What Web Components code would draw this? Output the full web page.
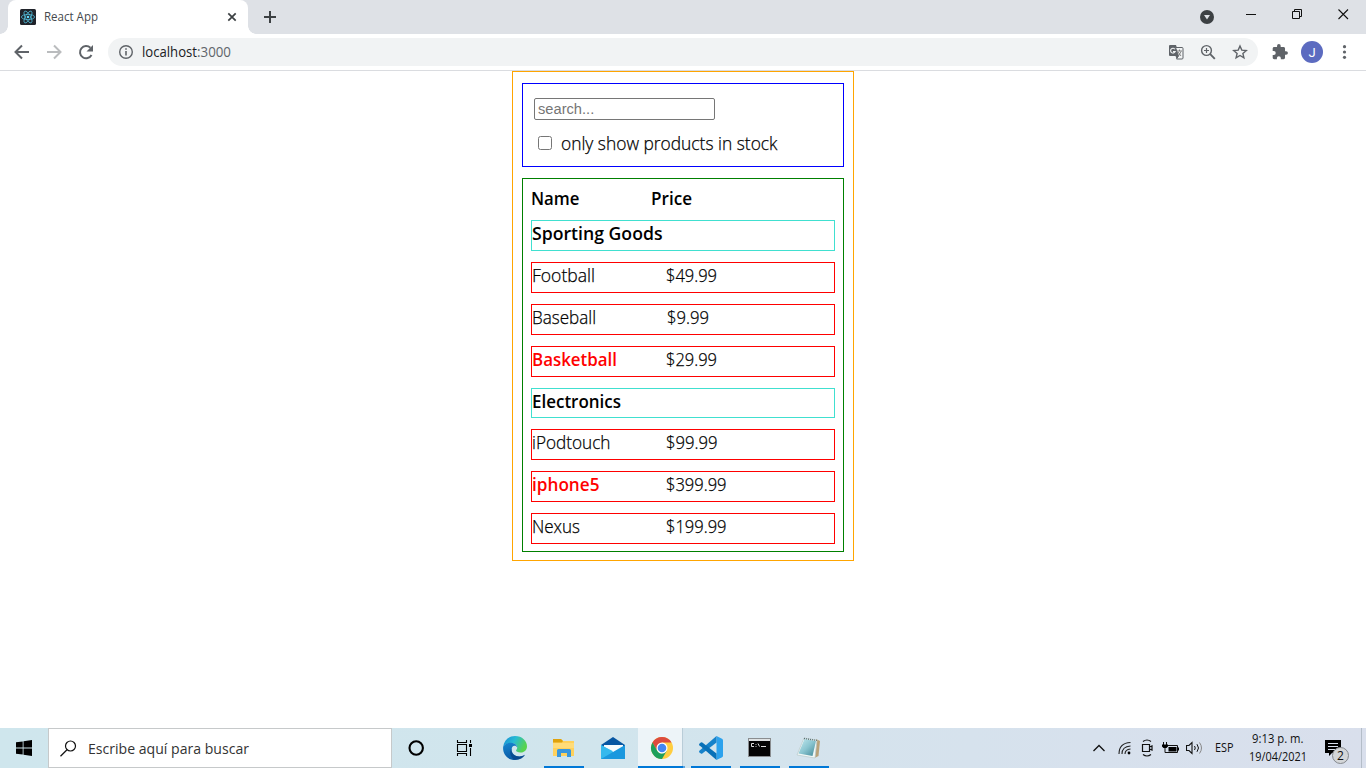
<!DOCTYPE html>
<html lang="es"><head><meta charset="utf-8"><title>React App</title>
<style>html,body{margin:0;height:100%;overflow:hidden;background:#fff;font-family:"Open Sans","Noto Sans",sans-serif}</style></head>
<body><desktop-screen></desktop-screen>
<script>
const define = (name, html, setup) => customElements.define(name, class extends HTMLElement {
  constructor(){ super(); const t=document.createElement('template'); t.innerHTML=html;
    this.attachShadow({mode:'open'}).append(t.content.cloneNode(true)); }
  connectedCallback(){ if(setup) setup.call(this,this.shadowRoot); }
});

/* Text run condensed or expanded to a given advance width */
define('fit-text', `<style>:host{display:block;flex:none;white-space:pre}span{display:inline-block;transform-origin:0 50%}</style><span><slot></slot></span>`,
 function(r){ const w=+this.getAttribute('w'), s=r.querySelector('span'); this.style.width=w+'px';
  s.style.transform='scaleX('+(w/s.getBoundingClientRect().width)+')'; });

define('browser-tabs', `<style>
:host{display:flex;height:34px;background:#dee1e6;padding-left:8px;box-sizing:border-box}
.tab{position:relative;width:240px;height:34px;background:#fff;border-radius:8px 8px 0 0;display:flex;align-items:center;padding-left:12px;box-sizing:border-box}
.tab:before,.tab:after{content:"";position:absolute;bottom:0;width:8px;height:8px}
.tab:before{left:-8px;background:radial-gradient(circle at 0 0,transparent 7.5px,#fff 8px)}
.tab:after{right:-8px;background:radial-gradient(circle at 100% 0,transparent 7.5px,#fff 8px)}
fit-text{margin-left:8px;font-size:12px;line-height:16px;color:#45494d}
.x{margin-left:128.5px}.plus{margin:10px 0 0 15px}.sp{flex:1}svg{display:block;flex:none}
.acc{margin:10px 32px 0 0}.min{margin:9px 35px 0 0}.max{margin:9px 35px 0 0}.close{margin:9px 17px 0 0}
</style>
<div class="tab"><svg width="16" height="16"><rect width="16" height="16" rx="1.5" fill="#20232a"/><g fill="none" stroke="#50b8d4" stroke-width=".8"><ellipse cx="8" cy="8" rx="6.6" ry="2.6"/><ellipse cx="8" cy="8" rx="6.6" ry="2.6" transform="rotate(60 8 8)"/><ellipse cx="8" cy="8" rx="6.6" ry="2.6" transform="rotate(120 8 8)"/></g><circle cx="8" cy="8" r="1.3" fill="#61dafb"/></svg>
<fit-text w="54">React App</fit-text><svg class="x" width="10" height="10"><path d="M1.3 1.3l7.4 7.4M8.7 1.3L1.3 8.7" stroke="#3c4043" stroke-width="1.7"/></svg></div>
<svg class="plus" width="14" height="14"><path d="M7 1v12M1 7h12" stroke="#3c4043" stroke-width="2"/></svg><div class="sp"></div>
<svg class="acc" width="14" height="14"><circle cx="7" cy="7" r="7" fill="#3c4043"/><path d="M4 5h6L7 9.5z" fill="#dee1e6"/></svg>
<svg class="min" width="11" height="11"><path d="M0 5.5h10" stroke="#111"/></svg>
<svg class="max" width="11" height="11"><path d="M.5 2.5h7v7h-7zM2.5 2.5v-2h7v7h-2" fill="none" stroke="#111"/></svg>
<svg class="close" width="11" height="11"><path d="M.5.5l9.5 9.5M10 .5L.5 10" stroke="#111" stroke-width="1.1"/></svg>`);

define('browser-toolbar', `<style>
:host{display:flex;align-items:center;height:37px;border-bottom:1px solid #dadce0;box-sizing:border-box;padding:0 9px 0 12px;background:#fff}
svg{display:block;flex:none}.nav{gap:12px;display:flex;width:96px}
.omni{display:flex;align-items:center;width:1150px;height:28px;border-radius:14px;background:#f1f3f4;box-sizing:border-box;padding:0 8px 0 8px}
fit-text{font-size:14px;line-height:20px;color:#202124}.host{margin-left:6px}.port{color:#60656a}
.sp{flex:1}.omni .a{margin-right:12px}.puz{margin-left:12px}
.av{width:22px;height:22px;border-radius:50%;background:#5c6bc0;color:#fff;display:flex;align-items:center;justify-content:center;font:13px Roboto,sans-serif;margin:0 10px 0 11px}
</style><div class="nav">
<svg width="20" height="20" viewBox="0 0 20 20"><path d="M17 10H4M10 3.500L3.500 10l6.500 6.500" fill="none" stroke="#5f6368" stroke-width="2"/></svg>
<svg width="20" height="20" viewBox="0 0 20 20"><path d="M3 10h13M10 3.500l6.500 6.500-6.500 6.500" fill="none" stroke="#babcbe" stroke-width="2"/></svg>
<svg width="20" height="20" viewBox="0 0 20 20"><path d="M15.500 13A6.100 6.100 0 1 1 14.400 5.800" fill="none" stroke="#5f6368" stroke-width="2"/><path d="M17 3v6.500h-6.500z" fill="#5f6368"/></svg></div>
<div class="omni"><svg width="20" height="20" viewBox="0 0 20 20"><circle cx="10" cy="10" r="6.300" fill="none" stroke="#5f6368" stroke-width="1.400"/><path d="M10 9v4.500M10 6.200v1.600" stroke="#5f6368" stroke-width="1.600"/></svg>
<fit-text class="host" w="55">localhost</fit-text><fit-text class="port" w="34">:3000</fit-text><div class="sp"></div>
<svg class="a" width="20" height="20" viewBox="0 0 20 20"><path d="M4 3h6l1.500 4.500L13 15l-2.500 1.500L9.500 14H4a1 1 0 0 1-1-1V4a1 1 0 0 1 1-1z" fill="#5f6368"/><path d="M9.500 5.500h6.500a1 1 0 0 1 1 1V16a1 1 0 0 1-1 1h-5.500l2-3z" fill="#f1f3f4" stroke="#5f6368"/><path d="M9 7.300A2.400 2.400 0 1 0 9.200 9.600H7" fill="none" stroke="#f1f3f4" stroke-width="1.100"/><path d="M11 9h5M13.500 7.500V9M12 10l3 4M15 9.500L12.500 14" fill="none" stroke="#777" stroke-width=".9"/></svg>
<svg class="a" width="20" height="20" viewBox="0 0 20 20"><circle cx="8.500" cy="8.500" r="4.900" fill="none" stroke="#5f6368" stroke-width="1.400"/><path d="M12.200 12.200l4.600 4.600" stroke="#5f6368" stroke-width="1.900"/><path d="M8.500 6v5M6 8.500h5" stroke="#5f6368" stroke-width="1.200"/></svg>
<svg width="20" height="20" viewBox="0 0 20 20"><path d="M10 4l1.800 4.100 4.500.4-3.400 3 1 4.400L10 13.500l-3.900 2.400 1-4.400-3.400-3 4.500-.4z" fill="none" stroke="#5f6368" stroke-width="1.400"/></svg></div>
<svg class="puz" width="20" height="20" viewBox="0 0 24 24"><path fill="#5f6368" d="M20.500 11H19V7c0-1.100-.9-2-2-2h-4V3.500a2.500 2.500 0 0 0-5 0V5H4c-1.100 0-2 .9-2 2v3.800h1.500a2.700 2.700 0 0 1 0 5.400H2V20c0 1.100.9 2 2 2h3.800v-1.500a2.700 2.700 0 0 1 5.400 0V22H17c1.100 0 2-.9 2-2v-4h1.500a2.500 2.500 0 0 0 0-5z" transform="translate(1.500 1.500) scale(.87)"/></svg>
<div class="av">J</div><svg width="22" height="20"><g fill="#5f6368"><circle cx="11.500" cy="4.700" r="1.600"/><circle cx="11.500" cy="10" r="1.600"/><circle cx="11.500" cy="15.300" r="1.600"/></g></svg>`);

define('search-bar', `<style>
:host{display:flex;flex-direction:column;height:84px;box-sizing:border-box;border:1px solid #00f;padding:14px 11px 0}
input[type=text]{display:block;box-sizing:border-box;width:181px;height:22px;margin:0;padding:1px 3px;border:1px solid #767676;border-radius:2px;font:14.67px "Liberation Sans",sans-serif;outline:0}
input::placeholder{color:#757575}
label{display:flex;align-items:center;height:24px;margin-top:11px;padding-left:4px;color:#000}
.box{appearance:none;width:14px;height:14px;margin:0 8.500px 0 0;box-sizing:border-box;border:1px solid #767676;border-radius:2.500px;background:#fff}
fit-text{font-size:17.6px;line-height:24px;font-weight:350;-webkit-text-stroke:.25px #000}
</style><input type="text" placeholder="search..."><label><input class="box" type="checkbox"><fit-text w="216.500">only show products in stock</fit-text></label>`);

define('category-row', `<style>:host{display:block;height:31px;box-sizing:border-box;border:1px solid turquoise;font-weight:650;font-size:17.6px;line-height:24px}</style><slot></slot>`);
define('product-row', `<style>:host{display:grid;grid-template-columns:134px 1fr;height:31px;box-sizing:border-box;border:1px solid red;font-size:17.6px;line-height:24px;color:#000}</style><slot></slot>`);
define('product-table', `<style>
:host{display:flex;flex-direction:column;gap:11px;height:374px;box-sizing:border-box;border:1px solid green;padding:7px 8px 0;color:#000}
header{display:grid;grid-template-columns:119.500px 1fr;height:23px;font-size:17.6px;line-height:24px;font-weight:650}
.short{height:30px}
product-row fit-text{font-weight:350;-webkit-text-stroke:.25px #000}
product-row[out] fit-text:first-child{color:red;font-weight:650;-webkit-text-stroke:0}
.wide{grid-template-columns:133.500px 1fr}.near{grid-template-columns:135px 1fr}
</style><header><fit-text w="48.500">Name</fit-text><fit-text w="41">Price</fit-text></header>
<category-row><fit-text w="130.500">Sporting Goods</fit-text></category-row>
<product-row><fit-text w="63">Football</fit-text><fit-text w="51">$49.99</fit-text></product-row>
<product-row class="near"><fit-text w="64">Baseball</fit-text><fit-text w="42">$9.99</fit-text></product-row>
<product-row out><fit-text w="85">Basketball</fit-text><fit-text w="51">$29.99</fit-text></product-row>
<category-row class="short"><fit-text w="89">Electronics</fit-text></category-row>
<product-row><fit-text w="78.500">iPodtouch</fit-text><fit-text w="51.500">$99.99</fit-text></product-row>
<product-row class="wide" out><fit-text w="67.500">iphone5</fit-text><fit-text w="60.500">$399.99</fit-text></product-row>
<product-row class="wide"><fit-text w="48">Nexus</fit-text><fit-text w="60.500">$199.99</fit-text></product-row>`);
define('product-app', `<style>:host{display:flex;flex-direction:column;gap:11px;width:342px;height:490px;box-sizing:border-box;border:1px solid orange;padding:11px 9px 0;margin:0 auto}</style><search-bar></search-bar><product-table></product-table>`);

define('task-item', `<style>:host{display:flex;position:relative;flex:none;width:49px;height:40px;align-items:center;justify-content:center}
::slotted(svg){display:block;position:relative}
:host([open]):after{content:"";position:absolute;left:5px;bottom:0;width:40px;height:2px;background:#0078d7}
:host([active]){background:linear-gradient(90deg,transparent 1px,#edf4f8 1px,#edf4f8 45px,#b9cdd8 45px,#b9cdd8 46px,#d3e3ec 46px,#d3e3ec 48px,transparent 48px)}
:host([active]):after{left:1px;width:47px;background:linear-gradient(90deg,#0078d7 45px,#5ba5df 45px)}</style><slot></slot>`);
define('task-bar', `<style>
:host{display:flex;height:40px;background:linear-gradient(90deg,#cfe6ed 0,#d1e5ed 45%,#d5e3ed 62%,#d7e1ed 80%,#d9dfec 100%);color:#111}
svg{display:block;flex:none}
.start{width:48px;display:flex;align-items:center;justify-content:center}
.search{display:flex;align-items:center;width:344px;box-sizing:border-box;border:1px solid #c6c9ca;background:#fff;padding-left:11px;gap:11px;font-size:14.5px;color:#333}
.apps{display:flex;flex:1}.tray{display:flex;align-items:center}
.esp{font-size:12px;line-height:16px;margin:0 16px 0 11px}.clock{font-size:12px;line-height:18px;display:flex;flex-direction:column;align-items:center;width:58px;margin-right:18px}
.note{position:relative;width:37px;height:40px;border-right:1px solid #b4bdc8;margin-right:4px;box-sizing:border-box}
.note svg{margin-top:11px}
.badge{position:absolute;left:7px;top:19px;width:17px;height:17px;border-radius:50%;box-sizing:border-box;border:1px solid #85898e;background:#d4d6d8;font-size:12px;line-height:15px;text-align:center}
</style>
<div class="start"><svg width="16" height="16"><path d="M0 2.300L6.700 1.400v6.200H0zM7.500 1.300L16 0v7.600H7.500zM0 8.400h6.700v6.200L0 13.700zM7.500 8.400H16V16l-8.500-1.200z"/></svg></div>
<div class="search"><svg width="17" height="17"><circle cx="10.500" cy="6" r="5" fill="none" stroke="#111" stroke-width="1.200"/><path d="M7 9.700L.5 16.200" stroke="#111" stroke-width="1.300"/></svg><fit-text w="161">Escribe aquí para buscar</fit-text></div>
<div class="apps">
<task-item><svg width="18" height="18"><circle cx="8.200" cy="9" r="6.700" fill="none" stroke="#000" stroke-width="2.100"/></svg></task-item>
<task-item><svg width="20" height="18"><path d="M1.500 5.500h9v7h-9zM1.500 1v2.500h9V1M1.500 17v-2.500h9V17M14.500 1v3M14.500 9v8" fill="none" stroke="#000" stroke-width="1.100"/><path d="M13 5h3v3h-3z"/></svg></task-item>
<task-item><svg width="24" height="24" viewBox="0 0 24 24"><defs><linearGradient id="g" x2="1" y2=".4"><stop stop-color="#168ad4"/><stop offset=".5" stop-color="#28bbd4"/><stop offset="1" stop-color="#58d34e"/></linearGradient><linearGradient id="b" x2=".3" y2="1"><stop stop-color="#1686d0"/><stop offset="1" stop-color="#0a59a4"/></linearGradient></defs><path fill="url(#g)" d="M.2 10.500C1 4.500 6 0 12 0c7.200 0 12 5 12 10.200 0 4-3 6.300-6.600 6.300-2.600 0-4.400-.8-4.400-1.900 0-.8 1.200-1.200 1.200-3.200C14.200 8.800 11.500 7 8 7 4.500 7 1.500 8.500.2 10.500z"/><path fill="url(#b)" d="M.2 10.500C2 7.500 5.200 6.300 8.200 6.700c3.500.3 6 2.300 6 4.700-.5-1-1.500-1.600-2.600-1.600-1.800 0-3 1.600-3 3.800 0 4 3.400 6.900 7.900 6.900 2 0 3.500-.5 5.500-1.700C20 21.800 16.500 24 12 24 4.500 24-.8 18 .2 10.500z"/><path fill="#083f83" opacity=".65" d="M8.600 12.500c-.8 4.500 2.700 8 7.900 8 2 0 3.500-.5 5.500-1.700-2.500 4.200-6 5-10 5-4-2-6.500-7.300-3.400-11.300z"/></svg></task-item>
<task-item open><svg width="22" height="20"><path d="M0 1h8l2 2h11v15H0z" fill="#ffd15c"/><path d="M0 1h8l2 2-1 1.500H0z" fill="#dfa20c"/><path d="M0 5h21v5H0z" fill="#ffdc79"/><path d="M4 19v-6.500Q4 11 5.500 11h11q1.500 0 1.500 1.500V19h-4v-4H8v4z" fill="#3997dd"/></svg></task-item>
<task-item><svg width="24" height="24"><path d="M0 9L12 1l12 8v3H0z" fill="#0756a2"/><path d="M3 9h19v9H3z" fill="#f7fbfd"/><path d="M0 9l12 6.200L0 23z" fill="#39bff0"/><path d="M0 9l24 14H0z" fill="#35b9ed"/><path d="M0 23L24 9v14z" fill="#1a98de"/></svg></task-item>
<task-item open active><svg width="24" height="24" viewBox="0 0 24 24"><circle cx="12" cy="12" r="11" fill="#ffcd40"/><path d="M12 12H6.500L2.470 6.500A11 11 0 0 1 21.530 6.500H12z" fill="#dc4b3e"/><path d="M2.470 6.500L7.200 14.700 8 9z" fill="#dc4b3e"/><path d="M2.470 6.500L7.240 14.750Q9 17.500 12 17.500l4.760-2.750L12 23A11 11 0 0 1 2.470 6.500z" fill="#1c9f5c"/><circle cx="12" cy="12" r="5.500" fill="#fff"/><circle cx="12" cy="12" r="4.300" fill="#4386f2"/></svg></task-item>
<task-item open><svg width="24" height="24" viewBox="0 0 24 24"><path d="M17.500 0L23 2.700q1 .5 1 1.500v15.600q0 1-1 1.500L17.500 24z" fill="#2ca2ed"/><path d="M17.500 0v6.500L3.300 17.500q-.8.600-1.500 0L.4 16.200q-.7-.7 0-1.400z" fill="#1682ca"/><path d="M17.500 24v-6.500L3.300 6.500q-.8-.6-1.500 0L.4 7.800q-.7.700 0 1.400z" fill="#0871b8"/></svg></task-item>
<task-item open><svg width="23" height="20"><rect width="23" height="19" fill="#8a8d90"/><rect x="1" y="1" width="21" height="2" fill="#dfe2e3"/><rect x="1" y="3" width="21" height="15" fill="#050505"/><path d="M6 5.500H3.500v3H6M8 6v.8M8 8v.8M10 5.500l1.500 3M13 8.500h5" fill="none" stroke="#ddd"/></svg></task-item>
<task-item open><svg width="25" height="24"><defs><linearGradient id="n" x2="1" y2="1"><stop stop-color="#c4eaf0"/><stop offset=".5" stop-color="#8ac5d0"/><stop offset="1" stop-color="#3f8797"/></linearGradient></defs><path d="M20 3l4 2-1.500 15-4 2z" fill="#b9a27a"/><path d="M8 2l13 2-2 18L1 19z" fill="#f1f7f6" stroke="#b8c8ca" stroke-width=".7"/><path d="M8.500 3L20 5l-3.500 15L2.500 17.500z" fill="url(#n)"/><path d="M8 2.500L21 4.500" stroke="#596d71" stroke-width="1.300" stroke-dasharray="1 1"/></svg></task-item>
</div>
<div class="tray">
<svg width="12" height="12" style="margin-right:13px"><path d="M.5 9L6 3.500 11.500 9" fill="none" stroke="#111" stroke-width="1.300"/></svg>
<svg width="14" height="14" style="margin-right:9px"><g fill="none" stroke="#222" stroke-width="1.100"><path d="M1 13Q1 2 12.500 1.500"/><path d="M4 13q0-7.500 8.500-8"/><path d="M7 13q0-4.500 5.500-5"/></g><circle cx="11" cy="12" r="1.400"/></svg>
<svg width="12" height="18" style="margin-right:9px"><path d="M1.500 5.500h7v7h-7zM8.500 8l2.500-1v4l-2.500-1M2 2.500Q6-.5 10 2.500M2 15.500q4 3 8 0" fill="none" stroke="#111" stroke-width="1.200"/></svg>
<svg width="17" height="12" style="margin-right:7px"><path d="M5.500 3.500h10v7h-10M1.500 0v3M4.500 0v3M3 6v4.500h3" fill="none" stroke="#111"/><path d="M0 2.500h6v2L4.500 6h-3L0 4.500zM6.500 5h8v4.500h-8zM16 5.500h1v3h-1z"/></svg>
<svg width="17" height="14" style="margin-right:1px"><path d="M.5 4.500h2.500L6 1.500v11L3 9.500H.5z" fill="none" stroke="#111" stroke-width="1.100"/><path d="M8.500 5q1.500 2 0 4M11 3.200q3 3.800 0 7.600" fill="none" stroke="#111"/><path d="M13.500 1.500q4 5.500 0 11" fill="none" stroke="#888"/></svg>
<fit-text class="esp" w="18.500">ESP</fit-text>
<div class="clock"><fit-text w="51.500">9:13 p. m.</fit-text><fit-text w="58">19/04/2021</fit-text></div>
<div class="note"><svg width="17" height="18"><path d="M0 1h16v13H7l-3 3v-3H0z"/><path d="M3 4.500h10M3 7.500h10M3 10.500h7" stroke="#d9dfec"/></svg><div class="badge">2</div></div>
</div>`);
define('desktop-screen', `<style>:host{display:flex;flex-direction:column;width:1366px;height:768px;background:#fff;overflow:hidden}main{flex:1;min-height:0}browser-tabs,browser-toolbar,task-bar{flex:none}</style><browser-tabs></browser-tabs><browser-toolbar></browser-toolbar><main><product-app></product-app></main><task-bar></task-bar>`);
</script></body></html>
